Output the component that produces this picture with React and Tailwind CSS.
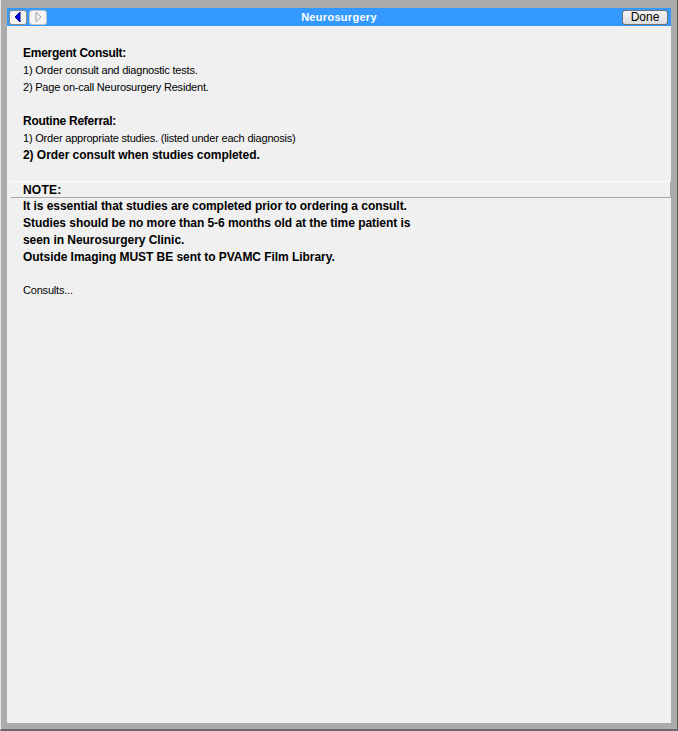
import React from "react";

export default function App() {
  const font = { fontFamily: '"Liberation Sans", Arial, sans-serif' };
  return (
    <div
      className="w-[678px] h-[731px] flex flex-col bg-[#ababab] border-l border-l-[#e8e8e8] border-r border-r-[#5a5a5a] border-b-2 border-b-[#6a6a6a] pt-[8px] pl-[6px] pr-[6px] pb-[6px]"
      style={font}
    >
      <div className="flex-1 flex flex-col bg-[#f0f0f0]">
        <div className="relative h-[18px] bg-[#3399ff] flex items-center pl-[2px] pr-[3px]">
          <button className="w-[18px] h-[15px] rounded-[3px] border border-[#8a8a8a] bg-[#f4f4f4] flex items-center justify-center">
            <svg width="10" height="12" viewBox="0 0 10 12">
              <path d="M7 1 L2 6 L7 11 Z" fill="#0000ee" stroke="#000080" strokeWidth="1" />
            </svg>
          </button>
          <button className="ml-[2px] w-[18px] h-[15px] rounded-[3px] border border-[#c4c4c4] bg-[#f4f4f4] flex items-center justify-center">
            <svg width="10" height="12" viewBox="0 0 10 12">
              <path d="M3 1.5 L8 6 L3 10.5 Z" fill="none" stroke="#a0a0a0" strokeWidth="1" />
            </svg>
          </button>
          <div className="absolute inset-0 flex items-center justify-center pointer-events-none">
            <span className="text-white font-bold text-[11px] tracking-[0.3px]">Neurosurgery</span>
          </div>
          <button className="ml-auto w-[46px] h-[15px] rounded-[3px] border border-[#707070] bg-gradient-to-b from-[#f6f6f6] to-[#dcdcdc] text-[12px] leading-[13px] text-black flex items-center justify-center">
            Done
          </button>
        </div>

        <div className="pt-[19px] text-[11px] text-black">
          <div className="pl-[16px]">
            <div className="font-bold text-[12px] leading-[17px] tracking-[-0.25px]">Emergent Consult:</div>
            <div className="leading-[17px] tracking-[-0.2px]">1) Order consult and diagnostic tests.</div>
            <div className="leading-[17px] tracking-[-0.2px]">2) Page on-call Neurosurgery Resident.</div>
            <div className="h-[17px]" />
            <div className="font-bold text-[12px] leading-[17px] tracking-[-0.25px]">Routine Referral:</div>
            <div className="leading-[17px] tracking-[-0.2px]">1) Order appropriate studies. (listed under each diagnosis)</div>
            <div className="font-bold text-[12px] leading-[17px] tracking-[-0.05px]">2) Order consult when studies completed.</div>
          </div>

          <div className="mt-[17px] ml-[4px] h-[17px] border-t border-t-white border-b border-b-[#a8a8a8] border-r border-r-[#a8a8a8] flex items-center pl-[12px]">
            <span className="font-bold text-[12px] tracking-[0.2px]">NOTE:</span>
          </div>

          <div className="pl-[16px] font-bold text-[12px] tracking-[-0.05px]">
            <div className="leading-[17px]">It is essential that studies are completed prior to ordering a consult.</div>
            <div className="leading-[17px]">Studies should be no more than 5-6 months old at the time patient is</div>
            <div className="leading-[17px]">seen in Neurosurgery Clinic.</div>
            <div className="leading-[17px]">Outside Imaging MUST BE sent to PVAMC Film Library.</div>
          </div>
          <div className="pl-[16px] mt-[16px] leading-[17px] tracking-[-0.2px]">Consults...</div>
        </div>
      </div>
    </div>
  );
}
